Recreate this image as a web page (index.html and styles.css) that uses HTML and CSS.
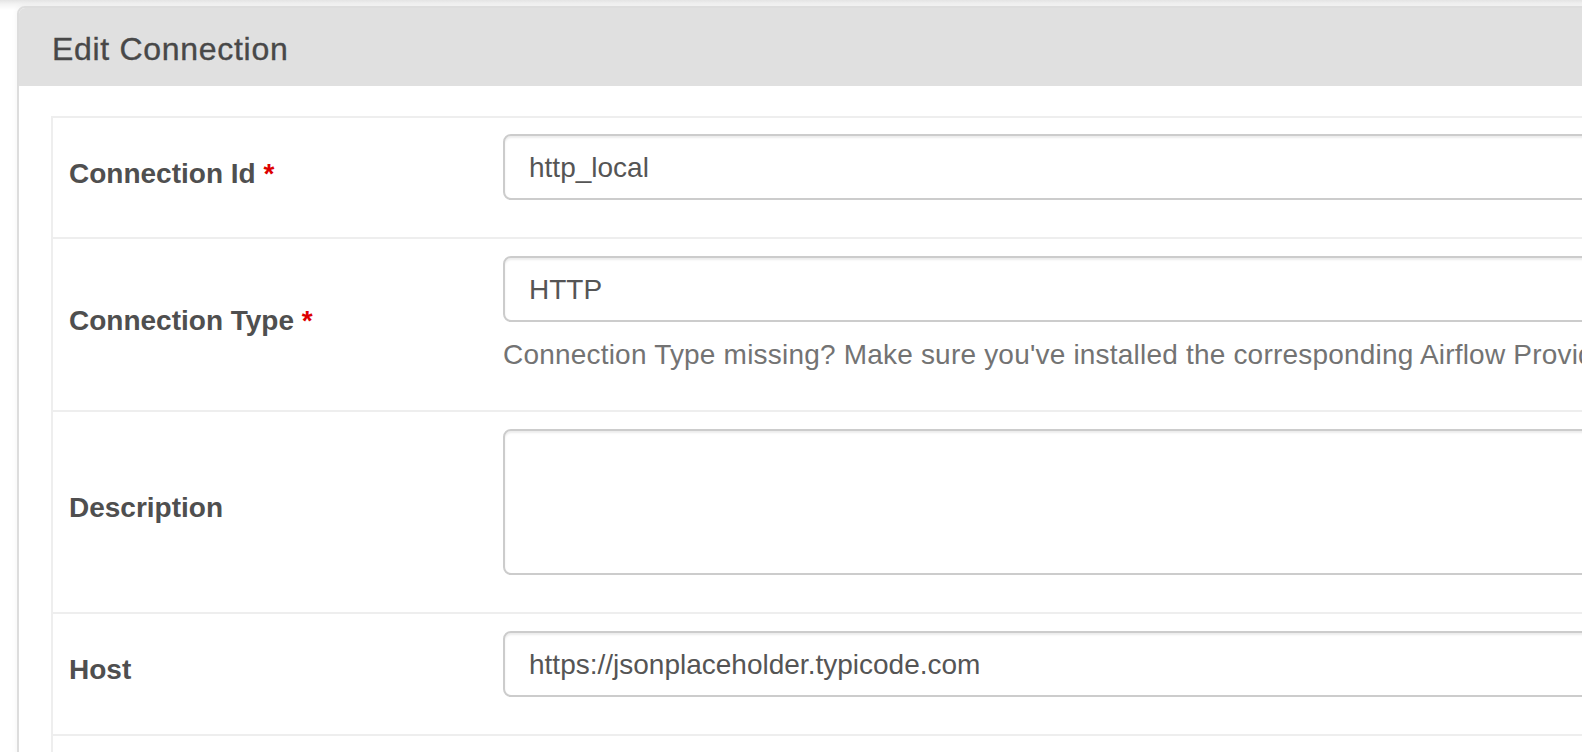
FILE: index.html
```html
<!DOCTYPE html>
<html lang="en">
<head>
<meta charset="utf-8">
<title>Edit Connection</title>
<link rel="stylesheet" href="styles.css">
</head>
<body>
<div class="page">
  <div class="panel">
    <div class="panel-heading">Edit Connection</div>
    <div class="panel-body">
      <div class="form-table">
        <div class="form-row">
          <div class="label-cell"><label>Connection Id <span class="req">*</span></label></div>
          <div class="field-cell"><div class="input">http_local</div></div>
        </div>
        <div class="form-row">
          <div class="label-cell"><label>Connection Type <span class="req">*</span></label></div>
          <div class="field-cell">
            <div class="input">HTTP</div>
            <p class="help">Connection Type missing? Make sure you've installed the corresponding Airflow Provider Package.</p>
          </div>
        </div>
        <div class="form-row">
          <div class="label-cell"><label>Description</label></div>
          <div class="field-cell"><div class="input textarea"></div></div>
        </div>
        <div class="form-row">
          <div class="label-cell"><label>Host</label></div>
          <div class="field-cell"><div class="input">https://jsonplaceholder.typicode.com</div></div>
        </div>
        <div class="form-row">
          <div class="label-cell"><label>Schema</label></div>
          <div class="field-cell"><div class="input"></div></div>
        </div>
        <div class="form-row">
          <div class="label-cell"><label>Login</label></div>
          <div class="field-cell"><div class="input"></div></div>
        </div>
      </div>
    </div>
  </div>
</div>
</body>
</html>
```
FILE: styles.css
```css
html, body {
  margin: 0;
  padding: 0;
  height: 100%;
  overflow: hidden;
}
body {
  background: #ffffff linear-gradient(to bottom, #e4e4e4 0px, #f3f3f3 4px, #ffffff 10px) no-repeat;
  font-family: "Liberation Sans", Arial, Helvetica, sans-serif;
  color: #555555;
}
.page {
  width: 2400px;
  padding: 6px 0 0 17px;
}
.panel {
  border: 2px solid #dddddd;
  border-radius: 8px;
  background: #ffffff;
  box-shadow: 0 0 6px rgba(0, 0, 0, 0.05);
}
.panel-heading {
  background: #e0e0e0;
  border-radius: 6px 6px 0 0;
  padding: 22px 31px 18px 33px;
  font-size: 32px;
  letter-spacing: 0.7px;
  line-height: 38px;
  color: #484848;
  -webkit-text-stroke: 0.35px #484848;
}
.panel-body {
  padding: 30px 32px;
}
.form-table {
  border: 2px solid #eeeeee;
}
.form-row {
  display: grid;
  grid-template-columns: 434px 1fr;
  align-items: center;
  border-bottom: 2px solid #eeeeee;
}
.label-cell, .field-cell {
  padding: 17px 16px;
}
.form-row:first-child .field-cell {
  padding-top: 16px;
}
.label-cell label {
  display: block;
  font-weight: bold;
  font-size: 28px;
  line-height: 40px;
  color: #4f4f4f;
  margin-bottom: 8px;
}
.req {
  color: #dd0000;
}
.input {
  box-sizing: border-box;
  height: 66px;
  border: 2px solid #cccccc;
  border-radius: 8px;
  box-shadow: inset 0 2px 2px rgba(0, 0, 0, 0.075);
  padding: 2px 24px 0;
  font-size: 28px;
  line-height: 60px;
  color: #555555;
  margin-bottom: 20px;
  white-space: nowrap;
}
.input.textarea {
  height: 146px;
}
.help {
  margin: 13px 0 18px;
  font-size: 28px;
  letter-spacing: 0.2px;
  line-height: 40px;
  color: #737373;
  white-space: nowrap;
}
.field-cell .input + .help {
  margin-top: -7px;
}
```
